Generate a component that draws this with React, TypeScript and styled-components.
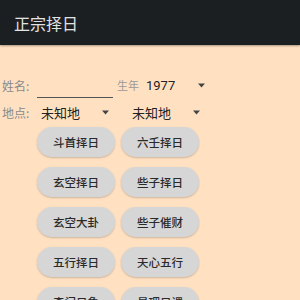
import styled, { createGlobalStyle } from "styled-components";

const GlobalStyle = createGlobalStyle`
    html, body {
        margin: 0;
        padding: 0;
    }
    body {
        font-family: Roboto, "Noto Sans CJK SC", sans-serif;
        background: #ffe1c2;
    }
`;

const buttonRows = [
    ["斗首择日", "六壬择日"],
    ["玄空择日", "些子择日"],
    ["玄空大卦", "些子催财"],
    ["五行择日", "天心五行"],
    ["奇门日象", "易理日课"],
];

const Arrow = () => (
    <svg width="7" height="5" viewBox="0 0 7 5">
        <path d="M0 0.5 H7 L3.5 4.5 Z" fill="#444" />
    </svg>
);

const Select = ({ value, width, gapAfter = 0 }) => {
    return (
        <SelectBox width={width} gapAfter={gapAfter}>
            <span>{value}</span>
            <Arrow />
        </SelectBox>
    );
};

export default function App() {
    return (
        <Screen>
            <GlobalStyle />
            <AppBar>正宗择日</AppBar>
            <Form>
                <Row>
                    <Label>姓名:</Label>
                    <NameInput />
                    <SmallLabel>生年</SmallLabel>
                    <Select value="1977" width={66} />
                </Row>
                <Row>
                    <Label>地点:</Label>
                    <Select value="未知地" width={75} gapAfter={16} />
                    <Select value="未知地" width={75} />
                </Row>
            </Form>
            <Buttons>
                {buttonRows.map((row, i) => (
                    <ButtonRow key={i}>
                        {row.map((name) => (
                            <Pill key={name}>{name}</Pill>
                        ))}
                    </ButtonRow>
                ))}
            </Buttons>
        </Screen>
    );
}

const Screen = styled.div`
    width: 300px;
    height: 300px;
    overflow: hidden;
    background: #ffe1c2;
`;

const AppBar = styled.header`
    height: 45px;
    display: flex;
    align-items: center;
    padding-left: 14px;
    background: #1b1f22;
    color: #e2e2e2;
    font-family: "Noto Sans CJK SC", sans-serif;
    font-size: 16px;
    box-shadow: 0 1px 2px rgba(0, 0, 0, 0.35);
`;

const Form = styled.section`
    display: flex;
    flex-direction: column;
    padding-top: 31px;
    gap: 9px;
`;

const Row = styled.div`
    display: flex;
    align-items: center;
    height: 18px;
    padding-left: 2px;
`;

const Label = styled.span`
    width: 35px;
    color: #8a8a8a;
    font-family: "Noto Sans CJK SC", sans-serif;
    font-size: 12px;
`;

const SmallLabel = styled.span`
    margin-left: 4px;
    margin-right: 3px;
    color: #999;
    font-family: "Noto Sans CJK SC", sans-serif;
    font-size: 11px;
`;

const NameInput = styled.div`
    width: 76px;
    height: 17px;
    border-bottom: 1px solid #555;
    transform: translateY(4px);
`;

const SelectBox = styled.div<{ width: number; gapAfter: number }>`
    box-sizing: border-box;
    width: ${(p) => p.width}px;
    display: flex;
    align-items: center;
    justify-content: space-between;
    padding-left: 4px;
    padding-right: 3px;
    margin-right: ${(p) => p.gapAfter}px;
    color: #222;
    font-family: Roboto, "Noto Sans CJK SC", sans-serif;
    font-size: 13px;
`;

const Buttons = styled.section`
    display: flex;
    flex-direction: column;
    gap: 10px;
    padding-top: 6px;
    padding-left: 37px;
`;

const ButtonRow = styled.div`
    display: flex;
    gap: 6px;
`;

const Pill = styled.button`
    height: 30px;
    padding: 0 16px;
    border: none;
    border-radius: 15px;
    background: #d6d6d6;
    color: #2a2a2a;
    font-family: "Noto Sans CJK SC", sans-serif;
    font-size: 11.5px;
    font-weight: 500;
    box-shadow: 0 1px 2px rgba(0, 0, 0, 0.2);
`;
